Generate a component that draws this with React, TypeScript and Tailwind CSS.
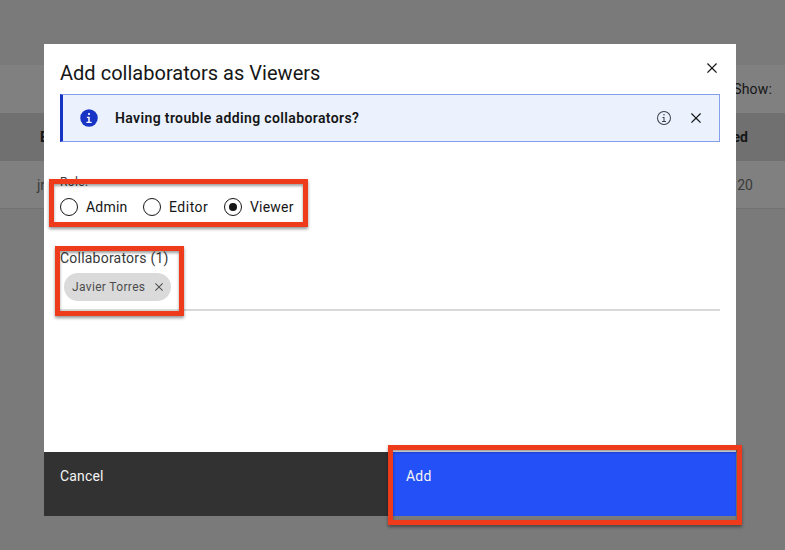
import React from "react";

function Cross({ size, className = "" }: { size: number; className?: string }) {
  return (
    <svg width={size} height={size} viewBox="0 0 32 32" fill="currentColor" className={className}>
      <path d="M24 9.4L22.6 8 16 14.6 9.4 8 8 9.4 14.6 16 8 22.6 9.4 24 16 17.4 22.6 24 24 22.6 17.4 16 24 9.4z" />
    </svg>
  );
}

function InfoFilled() {
  return (
    <svg width="20" height="20" viewBox="0 0 32 32" className="text-[#1834c4]">
      <circle cx="16" cy="16" r="14" fill="currentColor" />
      <circle cx="16" cy="9.5" r="1.7" fill="#fff" />
      <path fill="#fff" d="M17.2 21.9v-8.1h-4.6v2.2h2.2v5.9h-3v2.2h8.4v-2.2z" />
    </svg>
  );
}

function InfoOutline() {
  return (
    <svg width="16" height="16" viewBox="0 0 32 32" fill="currentColor" className="text-[#3d4048]">
      <path d="M17 22v-8h-4v2h2v6h-3v2h8v-2h-3zM16 8a1.5 1.5 0 1 0 1.5 1.5A1.5 1.5 0 0 0 16 8z" />
      <path d="M16 30a14 14 0 1 1 14-14 14 14 0 0 1-14 14zm0-26a12 12 0 1 0 12 12A12 12 0 0 0 16 4z" />
    </svg>
  );
}

function Radio({ label, checked = false, className }: { label: string; checked?: boolean; className: string }) {
  return (
    <label className={`flex items-center ${className}`}>
      <span className="flex size-[18px] items-center justify-center rounded-full border border-[#161616]">
        {checked && <span className="size-2 rounded-full bg-[#161616]" />}
      </span>
      <span className="ml-2 text-sm leading-[18px]">{label}</span>
    </label>
  );
}

function Callout({ className }: { className: string }) {
  return (
    <div
      className={`pointer-events-none absolute border-5 border-[#ed3b1b] shadow-[0_2px_3px_rgba(0,0,0,0.42),inset_0_2px_3px_rgba(0,0,0,0.38)] ${className}`}
    />
  );
}

function TablePage() {
  return (
    <div className="flex h-full flex-col bg-[#7a7a7a] text-sm text-[#161616]">
      <div className="h-[65px]" />
      <div className="flex h-12 items-center justify-end bg-[#808080] pr-[13px]">
        <span className="tracking-[0.16px]">Show:</span>
      </div>
      <div className="flex h-12 items-center justify-between bg-[#707070] pr-[37px] pl-10 font-bold">
        <span>Email</span>
        <span>Added</span>
      </div>
      <div className="flex h-12 items-center justify-between border-b border-[#727272] bg-[#808080] pr-8 pl-[37px] text-[#3a3a3a]">
        <span>jr</span>
        <span>20</span>
      </div>
    </div>
  );
}

export default function App() {
  return (
    <main className="relative h-[550px] w-[785px] overflow-hidden font-['Roboto','Noto_Sans',sans-serif]">
      <TablePage />
      <section className="absolute top-11 left-11 flex h-[472px] w-[692px] flex-col bg-white text-[#161616]">
        <header className="flex h-[50px] justify-between pr-3.5 pl-4">
          <h1 className="pt-4 text-xl leading-[26px] tracking-[0.02px]">Add collaborators as Viewers</h1>
          <Cross size={20} className="mt-3.5" />
        </header>
        <div className="mx-4 flex h-12 items-center border border-l-3 border-[#84a0ec] border-l-[#1834c4] bg-[#ebf2fe] pr-[13px] pl-4">
          <InfoFilled />
          <strong className="ml-4 flex-1 text-sm font-semibold tracking-[0.37px]">Having trouble adding collaborators?</strong>
          <InfoOutline />
          <Cross size={20} className="ml-3.5" />
        </div>
        <div className="mx-4 mt-8 text-xs leading-4 tracking-[0.4px] text-[#393939]">Role:</div>
        <div className="mx-4 mt-2 flex h-[18px]">
          <Radio label="Admin" className="w-[83px] tracking-[0.2px]" />
          <Radio label="Editor" className="w-[81px] tracking-[0.5px]" />
          <Radio label="Viewer" checked className="w-[83px] tracking-[0.2px]" />
        </div>
        <div className="mx-4 mt-[33px] h-[62px] border-b-2 border-[#d8d8d8]">
          <div className="text-sm leading-[18px] tracking-[0.22px] text-[#393939]">Collaborators (1)</div>
          <div className="mt-[6px] ml-1 flex h-7 w-[107px] items-center justify-between rounded-full bg-[#dadada] pr-1 pl-2 text-xs tracking-[0.34px] text-[#4c4c4c]">
            <span>Javier Torres</span>
            <Cross size={16} />
          </div>
        </div>
        <footer className="mt-auto flex h-16 text-sm leading-[18px] tracking-[0.18px] text-[#f4f4f4]">
          <button className="flex w-[346px] bg-[#323232] px-4 pt-[15px]">Cancel</button>
          <button className="flex w-[346px] bg-[#2450f8] px-4 pt-[15px]">Add</button>
        </footer>
      </section>
      <Callout className="top-[179px] left-[49px] h-12 w-[259px]" />
      <Callout className="top-[246px] left-[55px] h-[70px] w-[129px]" />
      <Callout className="top-[445px] left-[388px] h-20 w-[354px]" />
    </main>
  );
}
